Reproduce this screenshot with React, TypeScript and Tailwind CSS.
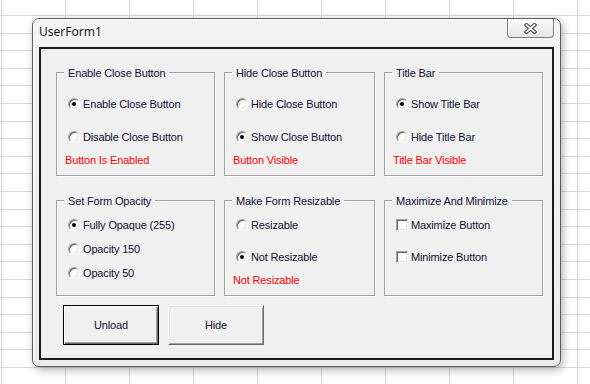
import React from 'react';

// spreadsheet grid behind the dialog
const cols = Array.from({ length: 10 }, (_, i) => 1 + i * 64);
const rows = Array.from({ length: 22 }, (_, i) => Math.round(15 + i * 17.6));

function SheetGrid() {
  return (
    <svg className="absolute inset-0" width="590" height="384" shapeRendering="crispEdges">
      {cols.map((x) => (
        <rect key={'c' + x} x={x} y={0} width={1} height={384} fill="#d9d9d9" />
      ))}
      {rows.map((y) => (
        <rect key={'r' + y} x={0} y={y} width={590} height={1} fill="#d9d9d9" />
      ))}
    </svg>
  );
}

const textCls = "font-['Liberation_Sans',Arial,sans-serif] text-[11px] leading-[16px] tracking-[-0.15px] text-[#101035] whitespace-nowrap";

function Radio({ text, checked, className = '' }: { text: string; checked?: boolean; className?: string }) {
  return (
    <div className={`flex h-[16px] items-center pl-[11px] ${className}`}>
      <span className="flex h-[12px] w-[12px] items-center justify-center rounded-full border border-t-[#a0a0a0] border-l-[#a0a0a0] border-r-white border-b-white bg-white shadow-[inset_1px_1px_0_#696969,inset_-1px_-1px_0_#e3e3e3]">
        {checked && <span className="h-[4px] w-[4px] rounded-full bg-black" />}
      </span>
      <span className={`ml-[3px] ${textCls}`}>{text}</span>
    </div>
  );
}

function Check({ text, className = '' }: { text: string; className?: string }) {
  return (
    <div className={`flex h-[16px] items-center pl-[11px] ${className}`}>
      <span className="h-[12px] w-[12px] border border-t-[#a0a0a0] border-l-[#a0a0a0] border-r-white border-b-white bg-white shadow-[inset_1px_1px_0_#696969,inset_-1px_-1px_0_#e3e3e3]" />
      <span className={`ml-[3px] ${textCls}`}>{text}</span>
    </div>
  );
}

function Status({ text, className = '' }: { text: string; className?: string }) {
  return (
    <div className={`h-[16px] pl-[8px] font-['Liberation_Sans',Arial,sans-serif] text-[11px] leading-[16px] tracking-[-0.15px] text-[#ff0000] ${className}`}>
      {text}
    </div>
  );
}

function Frame({ title, className, children }: { title: string; className: string; children: React.ReactNode }) {
  return (
    <div className={`relative flex flex-col border border-[#a0a0a0] shadow-[1px_1px_0_#ffffff,inset_1px_1px_0_#ffffff] ${className}`}>
      <span className={`absolute left-[7px] top-[-8px] h-[14px] bg-[#f0f0f0] px-[4px] ${textCls} leading-[14px]`}>
        {title}
      </span>
      {children}
    </div>
  );
}

export default function App() {
  return (
    <div className="relative h-[384px] w-[590px] overflow-hidden bg-white pl-[32px] pt-[18px]">
      <SheetGrid />

      <div className="relative flex h-[349px] w-[529px] flex-col rounded-[7px] border border-[#5c5c5c] bg-[linear-gradient(#f4f4f4,#ebebeb)] shadow-[2px_3px_8px_rgba(0,0,0,0.3),inset_1px_1px_0_#ffffff]">
        {/* title bar */}
        <div className="flex h-[28px] items-start justify-between px-[6px]">
          <span className="mt-[5px] font-['Noto_Sans',sans-serif] text-[12px] leading-[16px] text-[#1a1a1a]">
            UserForm1
          </span>
          <button
            type="button"
            className="flex h-[19px] w-[47px] items-center justify-center rounded-b-[4px] border border-t-0 border-[#7c7c7c] bg-[linear-gradient(#fafafa,#e6e6e6)] shadow-[inset_1px_0_0_#ffffff]"
          >
            <svg width="13" height="11" viewBox="0 0 13 11">
              <path d="M2.5 2 L10.5 9 M10.5 2 L2.5 9" stroke="#5e5e5e" strokeWidth="4" strokeLinecap="square" fill="none" />
              <path d="M2.5 2 L10.5 9 M10.5 2 L2.5 9" stroke="#ffffff" strokeWidth="1.6" strokeLinecap="square" fill="none" />
            </svg>
          </button>
        </div>

        {/* client area */}
        <div className="px-[6px] pb-[6px]">
          <div className="flex h-[313px] flex-col border-2 border-[#1c1c1c] bg-[#f0f0f0] pl-[15px] pt-[23px]">
            <div className="flex gap-[9px]">
              <Frame title="Enable Close Button" className="h-[104px] w-[159px] pt-[23px]">
                <Radio text="Enable Close Button" checked />
                <Radio text="Disable Close Button" className="mt-[17px]" />
                <Status text="Button Is Enabled" className="mt-[7px]" />
              </Frame>
              <Frame title="Hide Close Button" className="h-[104px] w-[151px] pt-[23px]">
                <Radio text="Hide Close Button" />
                <Radio text="Show Close Button" checked className="mt-[17px]" />
                <Status text="Button Visible" className="mt-[7px]" />
              </Frame>
              <Frame title="Title Bar" className="h-[104px] w-[159px] pt-[23px]">
                <Radio text="Show Title Bar" checked />
                <Radio text="Hide Title Bar" className="mt-[17px]" />
                <Status text="Title Bar Visible" className="mt-[7px]" />
              </Frame>
            </div>

            <div className="mt-[24px] flex gap-[9px]">
              <Frame title="Set Form Opacity" className="h-[96px] w-[159px] pt-[16px]">
                <Radio text="Fully Opaque (255)" checked />
                <Radio text="Opacity 150" className="mt-[8px]" />
                <Radio text="Opacity 50" className="mt-[8px]" />
              </Frame>
              <Frame title="Make Form Resizable" className="h-[96px] w-[151px] pt-[16px]">
                <Radio text="Resizable" />
                <Radio text="Not Resizable" checked className="mt-[16px]" />
                <Status text="Not Resizable" className="mt-[7px]" />
              </Frame>
              <Frame title="Maximize And Minimize" className="h-[96px] w-[159px] pt-[16px]">
                <Check text="Maximize Button" />
                <Check text="Minimize Button" className="mt-[16px]" />
              </Frame>
            </div>

            <div className="mt-[9px] flex gap-[9px] pl-[7px]">
              <button
                type="button"
                className={`h-[40px] w-[96px] border border-black bg-[#f0f0f0] shadow-[inset_1px_1px_0_#ffffff,inset_-1px_-1px_0_#696969,inset_-2px_-2px_0_#a0a0a0] ${textCls}`}
              >
                Unload
              </button>
              <button
                type="button"
                className={`h-[40px] w-[96px] border border-t-white border-l-white border-r-[#696969] border-b-[#696969] bg-[#f0f0f0] shadow-[inset_1px_1px_0_#e3e3e3,inset_-1px_-1px_0_#a0a0a0] ${textCls}`}
              >
                Hide
              </button>
            </div>
          </div>
        </div>
      </div>
    </div>
  );
}
